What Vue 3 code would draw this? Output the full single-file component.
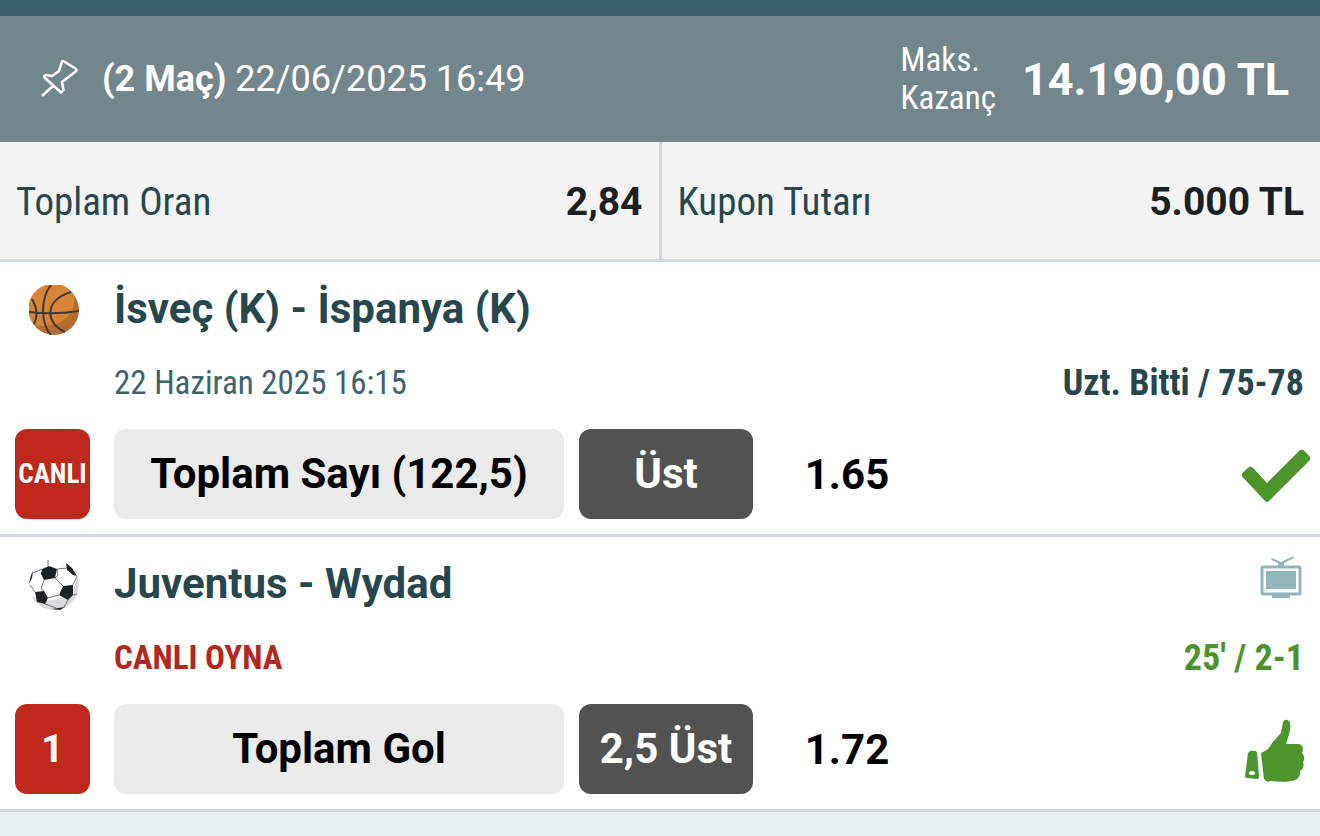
<script setup>
import { ref } from "vue";

const coupon = ref({
    count: "(2 Maç)",
    date: "22/06/2025 16:49",
    maxWin: "14.190,00 TL",
    odds: "2,84",
    stake: "5.000 TL",
});

const matches = ref([
    {
        sport: "basketball",
        teams: "İsveç (K) - İspanya (K)",
        info: "22 Haziran 2025 16:15",
        score: "Uzt. Bitti / 75-78",
        live: false,
        badge: "CANLI",
        market: "Toplam Sayı (122,5)",
        pick: "Üst",
        odd: "1.65",
        status: "won",
    },
    {
        sport: "football",
        teams: "Juventus - Wydad",
        info: "CANLI OYNA",
        score: "25' / 2-1",
        live: true,
        badge: "1",
        market: "Toplam Gol",
        pick: "2,5 Üst",
        odd: "1.72",
        status: "winning",
    },
]);
</script>
<template>
    <main class="coupon">
        <header class="header">
            <button class="pin" type="button" aria-label="Sabitle">
                <svg viewBox="0 0 38 38">
                    <path d="M1 36 13 25M4 18 20 32.500 22.500 30 21 22 34 12C36 11 36 10 34.500 8.500L23 1.500C21.500 .5 21 1 20.500 3L18 11 11 16 5 15Q2 16 4 18Z" />
                </svg>
            </button>
            <p class="summary"><strong>{{ coupon.count }}</strong> {{ coupon.date }}</p>
            <p class="max-label">Maks.<br />Kazanç</p>
            <strong class="max-value">{{ coupon.maxWin }}</strong>
        </header>
        <section class="totals">
            <div class="total">
                <span>Toplam Oran</span>
                <strong>{{ coupon.odds }}</strong>
            </div>
            <div class="total">
                <span>Kupon Tutarı</span>
                <strong>{{ coupon.stake }}</strong>
            </div>
        </section>
        <article v-for="match in matches" :key="match.teams" class="match">
            <div class="row title-row">
                <svg v-if="match.sport === 'basketball'" class="ball" viewBox="0 0 50 50">
                    <circle cx="25" cy="25" r="25" fill="#b56d2d" />
                    <path d="M44 8C50 25 34 46 5 40A25 25 0 0 1 44 8Z" fill="#d88437" />
                    <path d="M0 27Q25 30 50 26M22 0C12 12 11 38 22 50M42 7C15 15 16 38 36 47M3 14Q11 28 5 39" fill="none" stroke="#3f3a37" stroke-width="2" />
                </svg>
                <svg v-else class="ball" viewBox="0 0 50 50">
                    <path d="M5 12Q0 20 1 28C3 40 13 50 25 50C39 50 49 39 50 26Q50 13 38 4L25 6Z" fill="#fff" />
                    <path d="M48 16C54 33 43 47 29 50C16 51 7 45 3 36L18 41 37 37 45 28Z" fill="#d9d9db" />
                    <path d="M19 0V6M13 9 4 13M28 9 38 8M26 18 34 26M15 20 12 29 15 31M1 25 6 32M19 38 30 35M26 18 29 15 28 9M44 25 48 16M44 35 48 34M39 40 35 47M16 44 27 48" fill="none" stroke="#777" stroke-width="1" />
                    <path d="M13 9 20 6 28 9 26 18 15 20 12 14ZM34 26 44 25 44 35 39 40 30 35ZM6 32 15 31 19 38 16 44 8 42ZM37 3 43 8 48 16 44 15 38 10ZM4 11 3 18 0 24 2 15ZM23 49 36 47 31 50Z" fill="#1d2325" />
                </svg>
                <h2>{{ match.teams }}</h2>
                <svg v-if="match.live" class="tv" viewBox="0 0 42 42">
                    <rect x="2" y="11" width="38" height="27" rx="1" fill="none" stroke="#92b5b9" stroke-width="3" />
                    <path d="M6 15H36V33H6ZM12 39H30V42H12ZM18 10V7L11 4 12 2 21 6 33 0 34 2 24 7V10Z" fill="#92b5b9" />
                </svg>
            </div>
            <div class="row info-row" :class="{ live: match.live }">
                <a v-if="match.live" class="info" href="#">{{ match.info }}</a>
                <span v-else class="info">{{ match.info }}</span>
                <strong class="score">{{ match.score }}</strong>
            </div>
            <div class="bet">
                <span class="badge" :class="{ small: match.badge.length > 1 }">{{ match.badge }}</span>
                <span class="market">{{ match.market }}</span>
                <span class="pick">{{ match.pick }}</span>
                <span class="odd">{{ match.odd }}</span>
                <svg v-if="match.status === 'won'" class="check" viewBox="0 0 70 54">
                    <path d="M1.500 24 8 18Q10 17 12 19L26 34 58.500 1.500Q61 0 63 1.500L69 8Q70 10 68.500 11.500L28 52Q26 54 24 52L1.500 28Q0 26 1.500 24Z" />
                </svg>
                <svg v-else class="thumb" viewBox="0 0 60 64">
                    <path d="M5 32Q10 31 12 33L14 57Q14 60 12 60L2 59Q0 59 0 57L3 34ZM4 54Q4 56 7 56Q10 56 10 54Q10 52 7 52Q4 52 4 54Z" fill-rule="evenodd" />
                    <path d="M16 34Q24 31 27 24L36 14 38 3Q40-1 44 2Q46 4 45 12L41 25H54Q60 27 57 34Q61 38 58 43Q60 49 55 52Q56 58 50 61Q43 64 25 62Q22 64 19 60Z" />
                </svg>
            </div>
        </article>
    </main>
</template>
<style>
body {
    margin: 0;
    background: #e6eef1;
}
</style>
<style scoped>
.coupon {
    --condensed: "Roboto Condensed", Roboto, sans-serif;
    border-top: 16px solid #38606a;
    font-family: Roboto, sans-serif;
    color: #27474f;
}
.coupon p,
.coupon h2 {
    margin: 0;
}
.header {
    display: flex;
    align-items: center;
    min-height: 126px;
    padding: 0 31px 0 41px;
    box-sizing: border-box;
    background: #73868d;
    color: white;
}
.pin {
    width: 38px;
    height: 38px;
    padding: 0;
    border: 0;
    background: none;
}
.pin svg {
    display: block;
    fill: none;
    stroke: white;
    stroke-width: 2.5;
    stroke-linejoin: round;
}
.summary {
    flex: 1;
    padding-left: 23px;
    font-size: 36px;
}
.max-label {
    font-family: var(--condensed);
    font-size: 33px;
    line-height: 38px;
}
.max-value {
    margin-left: 26px;
    font-size: 45px;
}
.totals {
    display: flex;
    border-bottom: 3px solid #d0d9df;
    background: #f4f4f4;
}
.total {
    flex: 1;
    display: flex;
    align-items: center;
    justify-content: space-between;
    height: 115px;
    padding: 2px 16px 0;
    font-size: 39px;
}
.total:first-child {
    border-right: 3px solid #d0d9df;
}
.total span {
    font-family: var(--condensed);
}
.total strong {
    color: #1b2023;
}
.match {
    padding: 10px 16px 15px 15px;
    border-bottom: 3px solid #d0d9df;
    background: white;
}
.row {
    display: flex;
    align-items: center;
    justify-content: space-between;
}
.title-row {
    height: 74px;
}
.ball {
    width: 50px;
    height: 50px;
    margin: 2px 35px 0 14px;
}
.title-row h2 {
    flex: 1;
    padding-bottom: 2px;
    font-size: 42px;
    font-weight: 700;
}
.tv {
    align-self: flex-start;
    width: 42px;
    height: 42px;
    margin: 9px 2px 0 0;
}
.info-row {
    height: 73px;
    padding: 0 0 10px 99px;
    font-family: var(--condensed);
    font-size: 33px;
}
.info {
    color: #3d636c;
    text-decoration: none;
}
.score {
    font-size: 36px;
}
.live .info {
    color: #b3281d;
    font-weight: 700;
}
.live .score {
    color: #4b942d;
}
.bet {
    display: grid;
    grid-template-columns: 75px 474fr 189fr 188fr 363fr;
    align-items: center;
    height: 90px;
    font-size: 42px;
    font-weight: 700;
    text-align: center;
}
.badge,
.market,
.pick {
    border-radius: 12px;
    line-height: 90px;
    white-space: nowrap;
}
.badge {
    background: #bf291b;
    color: white;
    font-size: 39px;
}
.badge.small {
    font-family: var(--condensed);
    font-size: 27px;
}
.market {
    margin-left: 24px;
    background: #ebebeb;
    color: black;
}
.pick {
    margin-left: 15px;
    background: #525252;
    color: white;
}
.odd {
    color: black;
}
.check,
.thumb {
    justify-self: end;
    margin-top: 3px;
    fill: #4b952b;
}
.check {
    width: 70px;
    height: 54px;
    margin-right: -7px;
}
.thumb {
    width: 60px;
    height: 64px;
    margin-right: -1px;
}
</style>
